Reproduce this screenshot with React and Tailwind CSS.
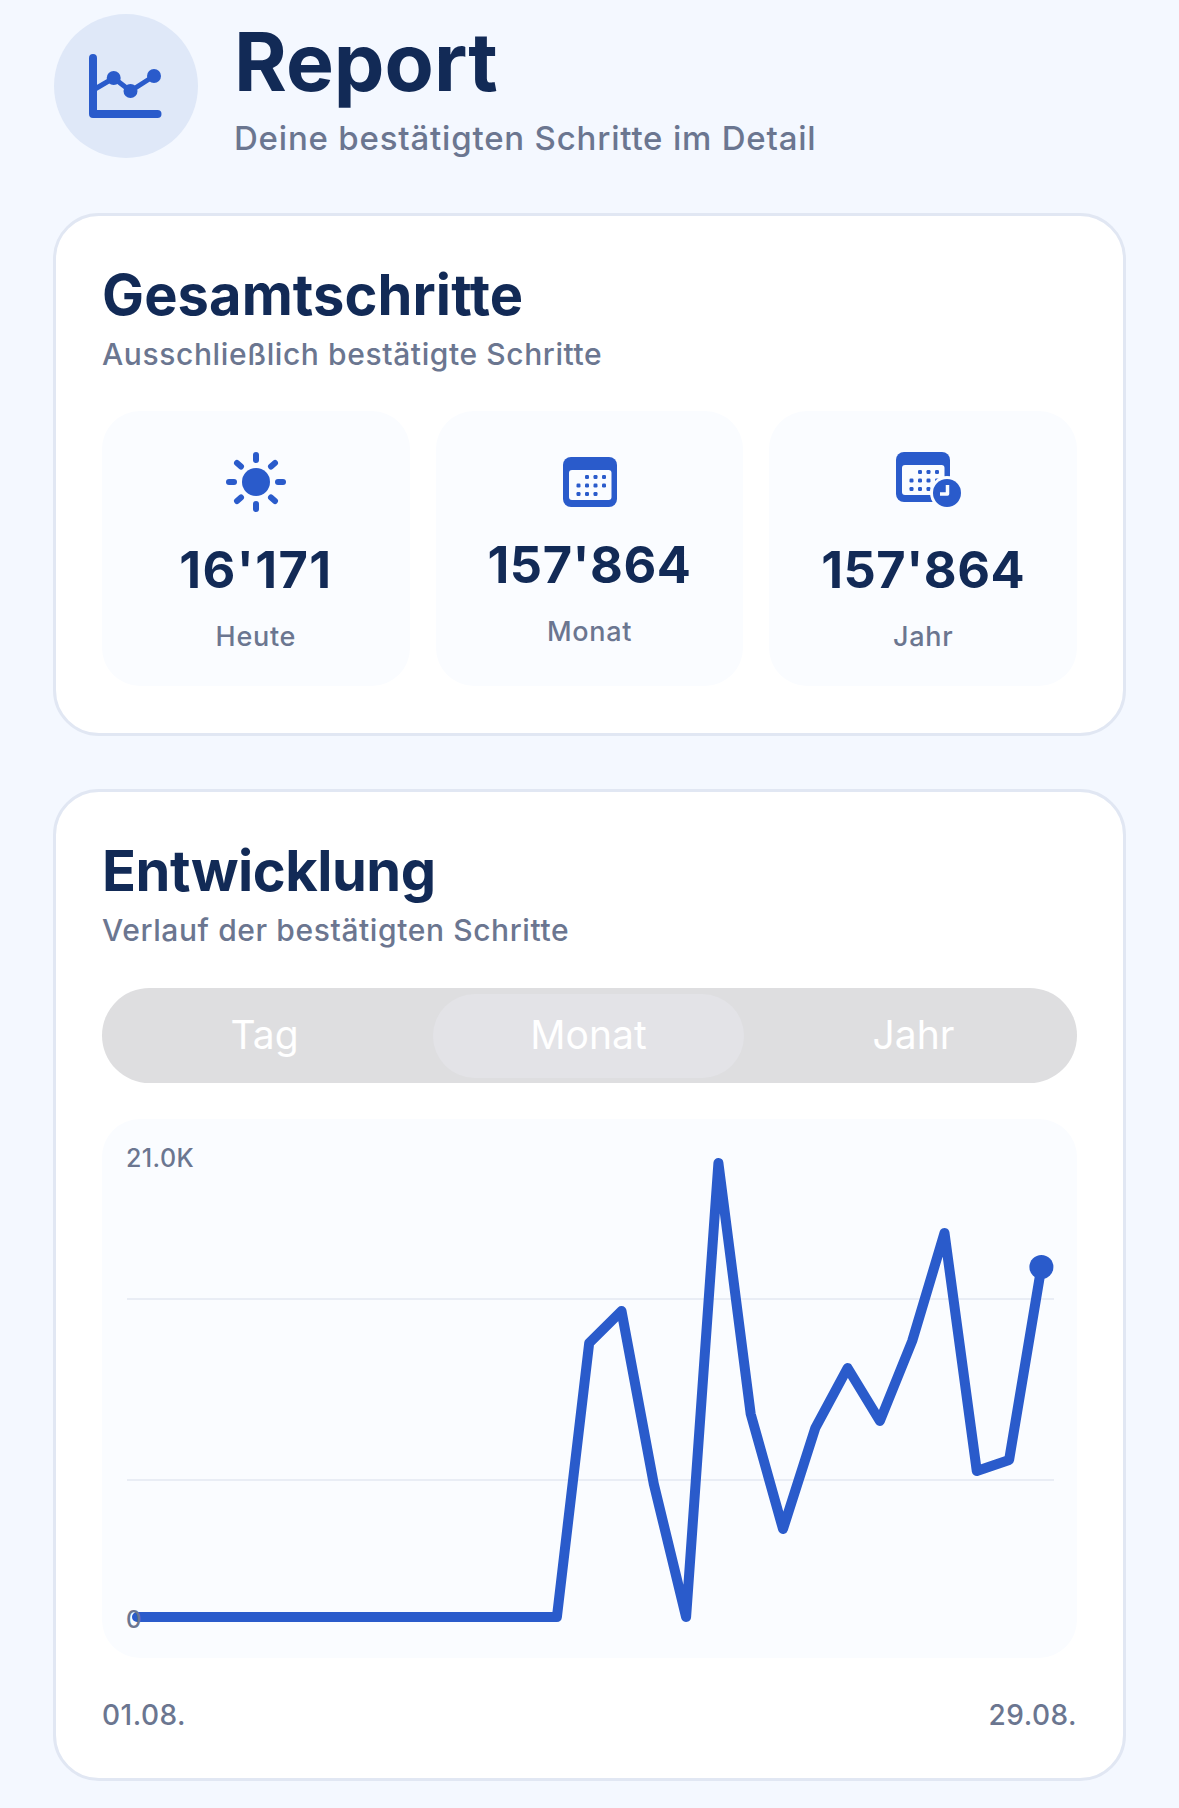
const chartValues = [
  1616, 1616, 1616, 1616, 1616, 1616, 1616, 1616, 1616, 1616, 1616, 1616, 1616, 1616,
  1342, 1310, 1483, 1616, 1162, 1413, 1528, 1427, 1367, 1420, 1340, 1232, 1470, 1459, 1266,
];
const chartPoints = chartValues.map((y, i) => `${137 + 32.3 * i},${y}`).join(' ');

const ReportIcon = () => (
  <svg width="74" height="72" viewBox="0 0 74 72" className="text-[#2a5bcb]">
    <path d="M4 8 V64 H68.5" fill="none" stroke="currentColor" strokeWidth="8" strokeLinecap="round" strokeLinejoin="round" />
    <path d="M6 39 L24.7 28 L41.5 41 L65 26" fill="none" stroke="currentColor" strokeWidth="5" />
    <circle cx="24.7" cy="28" r="7" fill="currentColor" />
    <circle cx="41.5" cy="41" r="7" fill="currentColor" />
    <circle cx="65" cy="26" r="7" fill="currentColor" />
  </svg>
);

const SunIcon = () => (
  <svg width="60" height="60" viewBox="0 0 60 60" className="text-[#2a5bcb]">
    <circle cx="30" cy="30" r="14" fill="currentColor" />
    <g stroke="currentColor" strokeWidth="6" strokeLinecap="round">
      <path d="M30 3 V8" />
      <path d="M30 52 V57" />
      <path d="M3 30 H8" />
      <path d="M52 30 H57" />
      <path d="M11 11 L15 14.5" />
      <path d="M49 11 L45 14.5" />
      <path d="M11 49 L15 45.5" />
      <path d="M49 49 L45 45.5" />
    </g>
  </svg>
);

const CalendarDots = () => (
  <g fill="currentColor">
    {[[26, 0], [34.5, 0], [43, 0], [17.5, 8.5], [26, 8.5], [34.5, 8.5], [43, 8.5], [17.5, 17], [26, 17], [34.5, 17]].map(([x, y]) => (
      <rect key={`${x}-${y}`} x={x - 8} y={y} width="4" height="4" rx="1.2" />
    ))}
  </g>
);

const CalendarIcon = () => (
  <svg width="54" height="50" viewBox="0 0 54 50" className="text-[#2a5bcb]">
    <rect width="54" height="50" rx="8" fill="currentColor" />
    <rect x="6" y="13" width="42.5" height="30" rx="3" fill="#fafcff" />
    <g transform="translate(4 18)">
      <CalendarDots />
    </g>
  </svg>
);

const CalendarClockIcon = () => (
  <svg width="66" height="60" viewBox="0 0 66 60" className="ml-[12px] text-[#2a5bcb]">
    <rect width="54" height="50" rx="8" fill="currentColor" />
    <rect x="6" y="13" width="42.5" height="30" rx="3" fill="#fafcff" />
    <g transform="translate(4 18)">
      <CalendarDots />
    </g>
    <circle cx="51" cy="41" r="17" fill="#fafcff" />
    <circle cx="51" cy="41" r="14" fill="currentColor" />
    <path d="M51.5 33 V42 H44" fill="none" stroke="#fafcff" strokeWidth="3.5" strokeLinejoin="round" />
  </svg>
);

const StatTile = ({ icon, value, valueClass, label }) => (
  <div className="flex h-[275px] flex-1 flex-col items-center justify-center rounded-[38px] bg-[#fafcff] pt-[7px]">
    {icon}
    <div className={`mt-[28px] text-[50.5px] leading-[60px] font-bold text-[#122a56] ${valueClass}`}>{value}</div>
    <div className="mt-[21px] text-[27px] leading-[32px] font-medium tracking-[0.7px] text-[#6b7690]">{label}</div>
  </div>
);

const Card = ({ title, titleClass, subtitle, children }) => (
  <section className="rounded-[46px] border-[3px] border-[#e1e7f3] bg-white px-[46px] pt-[49px] pb-[47px]">
    <h2 className={`text-[56px] leading-[60px] font-bold text-[#122a56] ${titleClass}`}>{title}</h2>
    <p className="mt-[11px] text-[30px] leading-[36px] font-medium tracking-[0.6px] text-[#6b7690]">{subtitle}</p>
    {children}
  </section>
);

const App = () => {
  return (
    <div className="h-[1808px] bg-[#f4f8ff] px-[53px] pt-[14px] font-[family-name:Inter,sans-serif]">
      {/* kopf */}
      <header className="mb-[55px] ml-[1px] flex items-start gap-[36px]">
        <div className="flex size-[144px] items-center justify-center rounded-full bg-[#dfe8f8]">
          <ReportIcon />
        </div>
        <div>
          <h1 className="mt-[2px] text-[80.5px] leading-[92px] font-bold text-[#122a56]">Report</h1>
          <p className="mt-[10px] text-[33px] leading-[40px] font-medium tracking-[0.8px] text-[#6b7690]">
            Deine bestätigten Schritte im Detail
          </p>
        </div>
      </header>

      {/* gesamtschritte */}
      <Card title="Gesamtschritte" titleClass="tracking-[0.1px]" subtitle="Ausschließlich bestätigte Schritte">
        <div className="mt-[39px] flex gap-[26px]">
          <StatTile icon={<SunIcon />} value="16'171" valueClass="tracking-[1.4px]" label="Heute" />
          <StatTile icon={<CalendarIcon />} value="157'864" valueClass="tracking-[0.5px]" label="Monat" />
          <StatTile icon={<CalendarClockIcon />} value="157'864" valueClass="tracking-[0.5px]" label="Jahr" />
        </div>
      </Card>

      <div className="h-[53px]" />

      {/* entwicklung */}
      <Card title="Entwicklung" titleClass="tracking-[-0.5px]" subtitle="Verlauf der bestätigten Schritte">
        <div className="mt-[40px] flex h-[95px] items-center gap-[12px] rounded-[48px] bg-[#dedee0] px-[6px]">
          <div className="flex h-[84px] w-[313px] items-center justify-center text-[39px] text-white">Tag</div>
          <div className="flex h-[84px] w-[311px] items-center justify-center rounded-[42px] bg-[#e3e3e7] text-[39px] text-white">
            Monat
          </div>
          <div className="flex h-[84px] flex-1 items-center justify-center text-[39px] text-white">Jahr</div>
        </div>

        <div className="relative mt-[36px] h-[539px] overflow-hidden rounded-[38px] bg-[#fafcff]">
          <svg width="975" height="539" viewBox="102 1118 975 539" className="block">
            <path d="M127 1298 H1054 M127 1479 H1054" stroke="#e3e8f2" strokeWidth="1.5" fill="none" />
            <polyline points={chartPoints} fill="none" stroke="#2a5bcb" strokeWidth="10" strokeLinejoin="round" strokeLinecap="round" />
            <circle cx="1041.4" cy="1266" r="12" fill="#2a5bcb" />
          </svg>
          <span className="absolute top-[24px] left-[24px] text-[25px] leading-[30px] font-medium tracking-[0.4px] text-[#6b7690]">21.0K</span>
          <span className="absolute top-[486px] left-[24px] text-[24px] leading-[30px] font-medium text-[#6b7690]">0</span>
        </div>

        <div className="mt-[41px] flex justify-between text-[28px] leading-[32px] font-medium tracking-[0.5px] text-[#6b7690]">
          <span>01.08.</span>
          <span>29.08.</span>
        </div>
      </Card>
    </div>
  );
};

export default App;
